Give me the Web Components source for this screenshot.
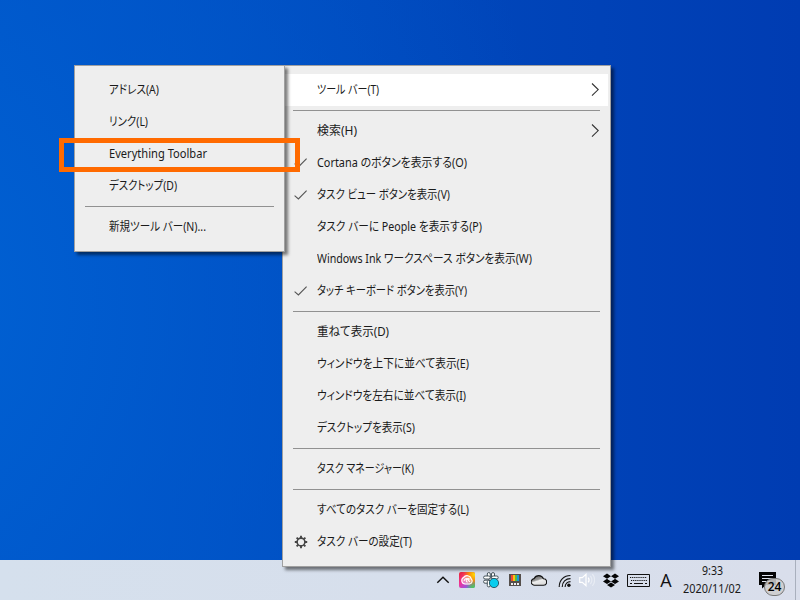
<!DOCTYPE html>
<html lang="ja">
<head>
<meta charset="utf-8">
<title>Desktop</title>
<style>
    html, body { margin: 0; height: 100%; overflow: hidden; }
    body {
        font: 12px/16px "Noto Sans", "Noto Sans CJK JP", sans-serif;
        color: #1a1a1a;
    }
</style>
</head>
<body>
<desk-top>
    <popup-menu style="left:282px;top:65px;width:329px;height:502px">
        <menu-item fit="62" arrow active>ツール バー(T)</menu-item>
        <menu-line></menu-line>
        <menu-item fit="40" arrow>検索(H)</menu-item>
        <menu-item fit="150" icon="check">Cortana のボタンを表示する(O)</menu-item>
        <menu-item fit="133" icon="check">タスク ビュー ボタンを表示(V)</menu-item>
        <menu-item fit="165">タスク バーに People を表示する(P)</menu-item>
        <menu-item fit="215">Windows Ink ワークスペース ボタンを表示(W)</menu-item>
        <menu-item fit="150" icon="check">タッチ キーボード ボタンを表示(Y)</menu-item>
        <menu-line></menu-line>
        <menu-item fit="72">重ねて表示(D)</menu-item>
        <menu-item fit="152">ウィンドウを上下に並べて表示(E)</menu-item>
        <menu-item fit="149">ウィンドウを左右に並べて表示(I)</menu-item>
        <menu-item fit="98">デスクトップを表示(S)</menu-item>
        <menu-line></menu-line>
        <menu-item fit="97">タスク マネージャー(K)</menu-item>
        <menu-line></menu-line>
        <menu-item fit="152">すべてのタスク バーを固定する(L)</menu-item>
        <menu-item fit="95" icon="gear">タスク バーの設定(T)</menu-item>
    </popup-menu>
    <popup-menu style="left:74px;top:65px;width:211px;height:187px">
        <menu-item fit="50">アドレス(A)</menu-item>
        <menu-item fit="39">リンク(L)</menu-item>
        <menu-item fit="98">Everything Toolbar</menu-item>
        <menu-item fit="68">デスクトップ(D)</menu-item>
        <menu-line></menu-line>
        <menu-item fit="97">新規ツール バー(N)...</menu-item>
    </popup-menu>
    <marker-frame style="left:59px;top:138px;width:241px;height:34px"></marker-frame>
    <task-bar slot="bar">
        <tray-icon name="chevron"></tray-icon>
        <tray-icon name="cloudapp"></tray-icon>
        <tray-icon name="slack"></tray-icon>
        <tray-icon name="toys"></tray-icon>
        <tray-icon name="cloud"></tray-icon>
        <tray-icon name="wifi"></tray-icon>
        <tray-icon name="speaker"></tray-icon>
        <tray-icon name="dropbox"></tray-icon>
        <tray-icon name="keyboard" style="width:31px"></tray-icon>
        <ime-mode>A</ime-mode>
        <tray-clock><fit-text slot="time" width="21">9:33</fit-text><fit-text slot="date" width="58">2020/11/02</fit-text></tray-clock>
        <notice-button>24</notice-button>
    </task-bar>
</desk-top>

<script>
const icons = {
    check: `<svg width="14" height="14" viewBox="0 0 14 14"><path d="M.6 7.6 4.4 11 12.6 2.6" fill="none" stroke="#555" stroke-width="1.1"/></svg>`,
    gear: `<svg width="14" height="14" viewBox="0 0 14 14"><circle cx="7" cy="7" r="3.9" fill="none" stroke="#444" stroke-width="1.6"/><path d="M7 .8v2.2M7 11v2.2M.8 7H3M11 7h2.2M2.6 2.6l1.6 1.6M9.8 9.8l1.6 1.6M2.6 11.4l1.6-1.6M9.8 4.2l1.6-1.6" stroke="#444" stroke-width="1.9"/></svg>`,
    arrow: `<svg width="9" height="14" viewBox="0 0 9 14"><path d="M1 .5 7.2 6.6 1 12.7" fill="none" stroke="#333" stroke-width="1.1"/></svg>`,
    chevron: `<svg width="14" height="10" viewBox="0 0 14 10"><path d="M1.3 7.8 7 2.2l5.7 5.6" fill="none" stroke="#111" stroke-width="1.4"/></svg>`,
    cloudapp: `<svg width="16" height="16" viewBox="0 0 16 16"><defs>
        <linearGradient id="a" x2="1" y2="1"><stop offset="0" stop-color="#e8252e"/><stop offset=".4" stop-color="#f0349a"/><stop offset=".7" stop-color="#9a52e0"/><stop offset="1" stop-color="#2f9cf5"/></linearGradient>
        <radialGradient id="b" cx="1" cy=".15" r=".85"><stop offset="0" stop-color="#ffe600"/><stop offset=".5" stop-color="#ff8a00" stop-opacity=".9"/><stop offset="1" stop-color="#ff3a30" stop-opacity="0"/></radialGradient>
        <radialGradient id="c" cx=".9" cy="1" r=".5"><stop offset="0" stop-color="#50d048"/><stop offset="1" stop-color="#50d048" stop-opacity="0"/></radialGradient></defs>
        <rect width="16" height="16" rx="2" fill="url(#a)"/><rect width="16" height="16" rx="2" fill="url(#b)"/><rect width="16" height="16" rx="2" fill="url(#c)"/>
        <rect x="2.6" y="3.4" width="10.8" height="9.2" rx="4.5" fill="#fff" opacity=".35"/>
        <path d="M6 12a3.4 3.4 0 0 1-1.4-6.4 4.2 4.2 0 0 1 7.6 1.2A3 3 0 0 1 10.6 12zM5.2 9.2a2.2 2.2 0 0 1 3-2.4l2.6 3M8.6 10.2a1.8 1.8 0 1 1 2-2.6" fill="none" stroke="#fff" stroke-width="1.1"/></svg>`,
    slack: `<svg width="16" height="16" viewBox="0 0 16 16"><g fill="#fff" stroke="#34434b" stroke-width=".9"><rect x="4.3" y=".6" width="3" height="6.4" rx="1.4"/><rect x="8.5" y=".6" width="3" height="6.4" rx="1.4"/><rect x=".6" y="4" width="6.6" height="3" rx="1.4"/><rect x="8.6" y="4" width="6.6" height="3" rx="1.4"/><rect x=".6" y="8.2" width="6.6" height="3" rx="1.4"/><rect x="4.3" y="8.3" width="3" height="6.6" rx="1.4"/></g><circle cx="11" cy="11" r="4.6" fill="#08cdee" stroke="#23515d" stroke-width=".9"/></svg>`,
    toys: `<svg width="12" height="14" viewBox="0 0 12 14"><path fill="#554f4c" d="M0 1h12v12H0z"/><path fill="#ef4b32" d="M2 2h2v6H2z"/><path fill="#ffc20c" d="M4 2h2v6H4z"/><path fill="#58b947" d="M6 2h2v6H6z"/><path fill="#169bd7" d="M8 2h2v6H8z"/><path d="M2 10h2v2H2zM5 10h2v2H5zM8 10h2v2H8z" fill="#eee"/></svg>`,
    cloud: `<svg width="16" height="12" viewBox="0 0 16 12"><defs><linearGradient id="d" x2=".5" y2="1"><stop offset="0" stop-color="#555"/><stop offset=".5" stop-color="#999"/><stop offset=".62" stop-color="#eee"/><stop offset="1" stop-color="#ddd"/></linearGradient></defs><path d="M3.8 11.2A3.3 3.3 0 0 1 3.2 4.6 5 5 0 0 1 12.4 4.8 3.2 3.2 0 0 1 12.5 11.2z" fill="url(#d)" stroke="#111" stroke-width="1.1"/></svg>`,
    wifi: `<svg width="14" height="14" viewBox="0 0 14 14" style="margin:1px 0 0 3px"><g fill="none" stroke="#111" stroke-width="1.1"><path d="M1.2 13C1.2 6 6 1.5 12.5 1.5"/><path d="M4.2 13c0-5 3.5-8.4 8.3-8.4"/><path d="M7.1 13c0-3.4 2.3-5.4 5.4-5.4"/></g><circle cx="10.9" cy="11.3" r="1.7" fill="#111"/></svg>`,
    speaker: `<svg width="16" height="14" viewBox="0 0 16 14"><g fill="none" stroke="#fff" stroke-width="1.2"><path d="M.7 4.6h2.6L7 1.3v11.4L3.3 9.4H.7z"/><path d="M9.2 4.6a4 4 0 0 1 0 4.8"/><path d="M11.4 2.9a7 7 0 0 1 0 8.2M13.4 1.1a9 9 0 0 1 0 11.8" opacity=".4"/></g></svg>`,
    dropbox: `<svg width="16" height="15" viewBox="0 0 16 15"><path fill="#050505" d="M4 .6 8 3.2 4 5.8 0 3.2zM12 .6l4 2.6-4 2.6-4-2.6zM4 5.8l4 2.6L4 11 0 8.4zM12 5.8l4 2.6-4 2.6-4-2.6zM8 9.4l4 2.5-4 2.5-4-2.5z"/><path d="M8 3.8 11.4 6 8 8.1 4.6 6z" fill="#d8e0ec"/></svg>`,
    keyboard: `<svg width="23" height="13" viewBox="0 0 23 13"><path d="M.5.5h22v12H.5z" fill="none" stroke="#111"/><path d="M3 3.5h17M4 6.5h16" stroke="#111" stroke-width="1.2" stroke-dasharray="1.2 .9"/><path d="M3 9.5h2M7 9.5h9M18 9.5h2" stroke="#111" stroke-width="1.2"/></svg>`,
    notice: `<svg width="18" height="18" viewBox="0 0 18 18"><path d="M0 0h17v13H7l-4 3.5V13H0z" fill="#050505"/><path d="M3 3.5h11M3 6.5h11M3 9.5h8" stroke="#dfe4ee"/></svg>`
}

function define(name, html, setup) {
    const template = document.createElement('template')
    template.innerHTML = html
    customElements.define(name, class extends HTMLElement {
        connectedCallback() {
            if (this.shadowRoot) return
            const root = this.attachShadow({ mode: 'open' })
            root.append(template.content.cloneNode(true))
            setup?.call(this, root)
        }
    })
}

// squeezes a label to a given width, the kana are much narrower than full width
define('fit-text', `<style>
    :host { display: block; white-space: pre; font-feature-settings: "palt"; }
    span { display: inline-block; transform-origin: 0 50%; }
</style><span><slot></slot></span>`, function (root) {
    const span = root.querySelector('span')
    const want = +this.getAttribute('width')
    if (!want) return
    this.style.width = want + 'px'
    const natural = span.getBoundingClientRect().width
    if (natural) span.style.transform = `scaleX(${want / natural})`
})

define('desk-top', `<style>
    :host {
        display: flex; flex-direction: column; position: relative;
        width: 800px; height: 600px; overflow: hidden;
        background: radial-gradient(ellipse 640px 760px at -80px 300px, rgba(0,98,212,.9) 0, rgba(0,90,206,.65) 45%, rgba(0,72,188,0) 100%),
            linear-gradient(90deg, #0056c8, #0048bc 50%, #003cb2);
    }
    main { flex: 1; }
</style><main><slot></slot></main><slot name="bar"></slot>`)

define('popup-menu', `<style>
    :host {
        display: flex; flex-direction: column; position: absolute; z-index: 2; box-sizing: border-box;
        padding: 8px 2px 7px; border: 1px solid #a0a0a0; background: #eee;
        box-shadow: 3px 3px 3px rgba(0,0,0,.5);
    }
</style><slot></slot>`)

define('menu-item', `<style>
    :host { display: grid; grid-template-columns: 32px 1fr 17px; align-items: center; flex: none; height: 32px; }
    :host([active]) { background: #fff; }
    .icon { display: flex; padding-left: 9px; }
    .arrow { display: flex; }
    svg { display: block; }
</style><span class="icon"></span><fit-text><slot></slot></fit-text><span class="arrow"></span>`, function (root) {
    root.querySelector('.icon').innerHTML = icons[this.getAttribute('icon')] ?? ''
    if (this.hasAttribute('arrow')) root.querySelector('.arrow').innerHTML = icons.arrow
    const label = root.querySelector('fit-text')
    const next = document.createElement('fit-text')
    next.setAttribute('width', this.getAttribute('fit'))
    next.append(...label.childNodes)
    label.replaceWith(next)
})

define('menu-line', `<style>
    :host { display: block; flex: none; height: 1px; margin: 4px 8px; background: #919191; }
</style>`)

define('marker-frame', `<style>
    :host { display: block; position: absolute; z-index: 3; box-sizing: border-box; border: 5px solid #ff6a00; }
</style>`)

define('task-bar', `<style>
    :host {
        display: flex; justify-content: flex-end; align-items: stretch; box-sizing: border-box;
        height: 40px; padding-right: 4px; background: linear-gradient(90deg, #d5e0ed, #d9deeb);
    }
    i { width: 1px; margin-left: 8px; background: #a9b0bd; }
</style><slot></slot><i></i>`)

define('tray-icon', `<style>
    :host { display: flex; align-items: center; justify-content: center; width: 24px; }
    svg { display: block; }
</style>`, function (root) {
    root.innerHTML += icons[this.getAttribute('name')]
})

define('ime-mode', `<style>
    :host { display: flex; align-items: center; justify-content: center; width: 24px; font: 18px/20px "Open Sans", sans-serif; color: #111; }
</style><span><slot></slot></span>`)

define('tray-clock', `<style>
    :host { display: flex; flex-direction: column; align-items: center; width: 68px; box-sizing: border-box; padding-top: 2px; line-height: 18px; }
</style><slot name="time"></slot><slot name="date"></slot>`)

define('notice-button', `<style>
    :host { display: block; position: relative; width: 41px; box-sizing: border-box; padding: 12px 0 0 13px; }
    svg { display: block; }
    b {
        position: absolute; left: 18px; top: 18px; width: 21px; height: 18px; box-sizing: border-box;
        border: 1px solid #777; border-radius: 9px; background: rgba(205,205,205,.88);
        font: 600 12px/16px "Open Sans", sans-serif; text-align: center; color: #000;
    }
</style>${icons.notice}<b><slot></slot></b>`)
</script>
</body>
</html>
